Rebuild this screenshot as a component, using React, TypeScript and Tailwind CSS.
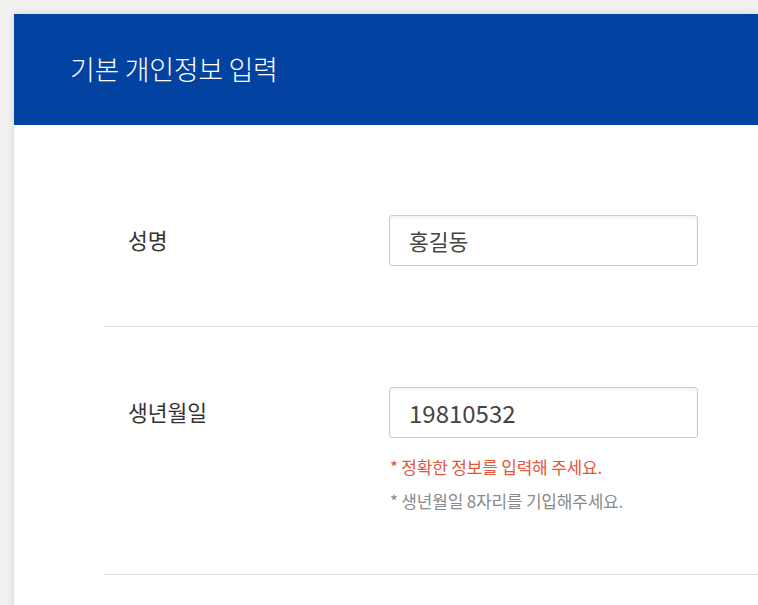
export default function App() {
  const font = { fontFamily: '"Noto Sans CJK KR", "Noto Sans", sans-serif' };
  return (
    <div className="min-h-[605px] w-[758px] overflow-hidden bg-[#f1f1f1] pl-[14px] pt-[14px]" style={font}>
      <div className="min-h-[620px] bg-white shadow-[0_0_8px_rgba(0,0,0,0.12)]">
        <div className="flex h-[111px] items-center bg-[#0242a0] pl-[56px]">
          <h1 className="text-[27px] font-light tracking-[-0.3px] text-white">기본 개인정보 입력</h1>
        </div>
        <div className="pl-[90px]">
          <div className="flex items-start border-b border-[#dcdcdc] pb-[60px] pt-[90px]">
            <div className="flex h-[51px] w-[285px] items-center pl-[24px] text-[21.5px] text-[#333]">성명</div>
            <input
              readOnly
              value="홍길동"
              className="h-[51px] w-[309px] rounded-[3px] border border-[#cccccc] pl-[19px] text-[21.5px] text-[#444] shadow-[inset_0_2px_3px_rgba(0,0,0,0.06)] outline-none"
              style={font}
            />
          </div>
          <div className="flex items-start border-b border-[#dcdcdc] pb-[61px] pt-[60px]">
            <div className="flex h-[51px] w-[285px] items-center pl-[24px] text-[21.5px] text-[#333]">생년월일</div>
            <div className="flex flex-col">
              <input
                readOnly
                value="19810532"
                className="h-[51px] w-[309px] rounded-[3px] border border-[#cccccc] pl-[19px] text-[24px] text-[#444] shadow-[inset_0_2px_3px_rgba(0,0,0,0.06)] outline-none"
                style={font}
              />
              <p className="mt-[17px] pl-[1px] text-[17px] leading-[24px] tracking-[-0.2px] text-[#e5563c]">* 정확한 정보를 입력해 주세요.</p>
              <p className="mt-[10px] pl-[1px] text-[17px] leading-[24px] tracking-[-0.2px] text-[#8a8a8a]">* 생년월일 8자리를 기입해주세요.</p>
            </div>
          </div>
        </div>
      </div>
    </div>
  );
}
